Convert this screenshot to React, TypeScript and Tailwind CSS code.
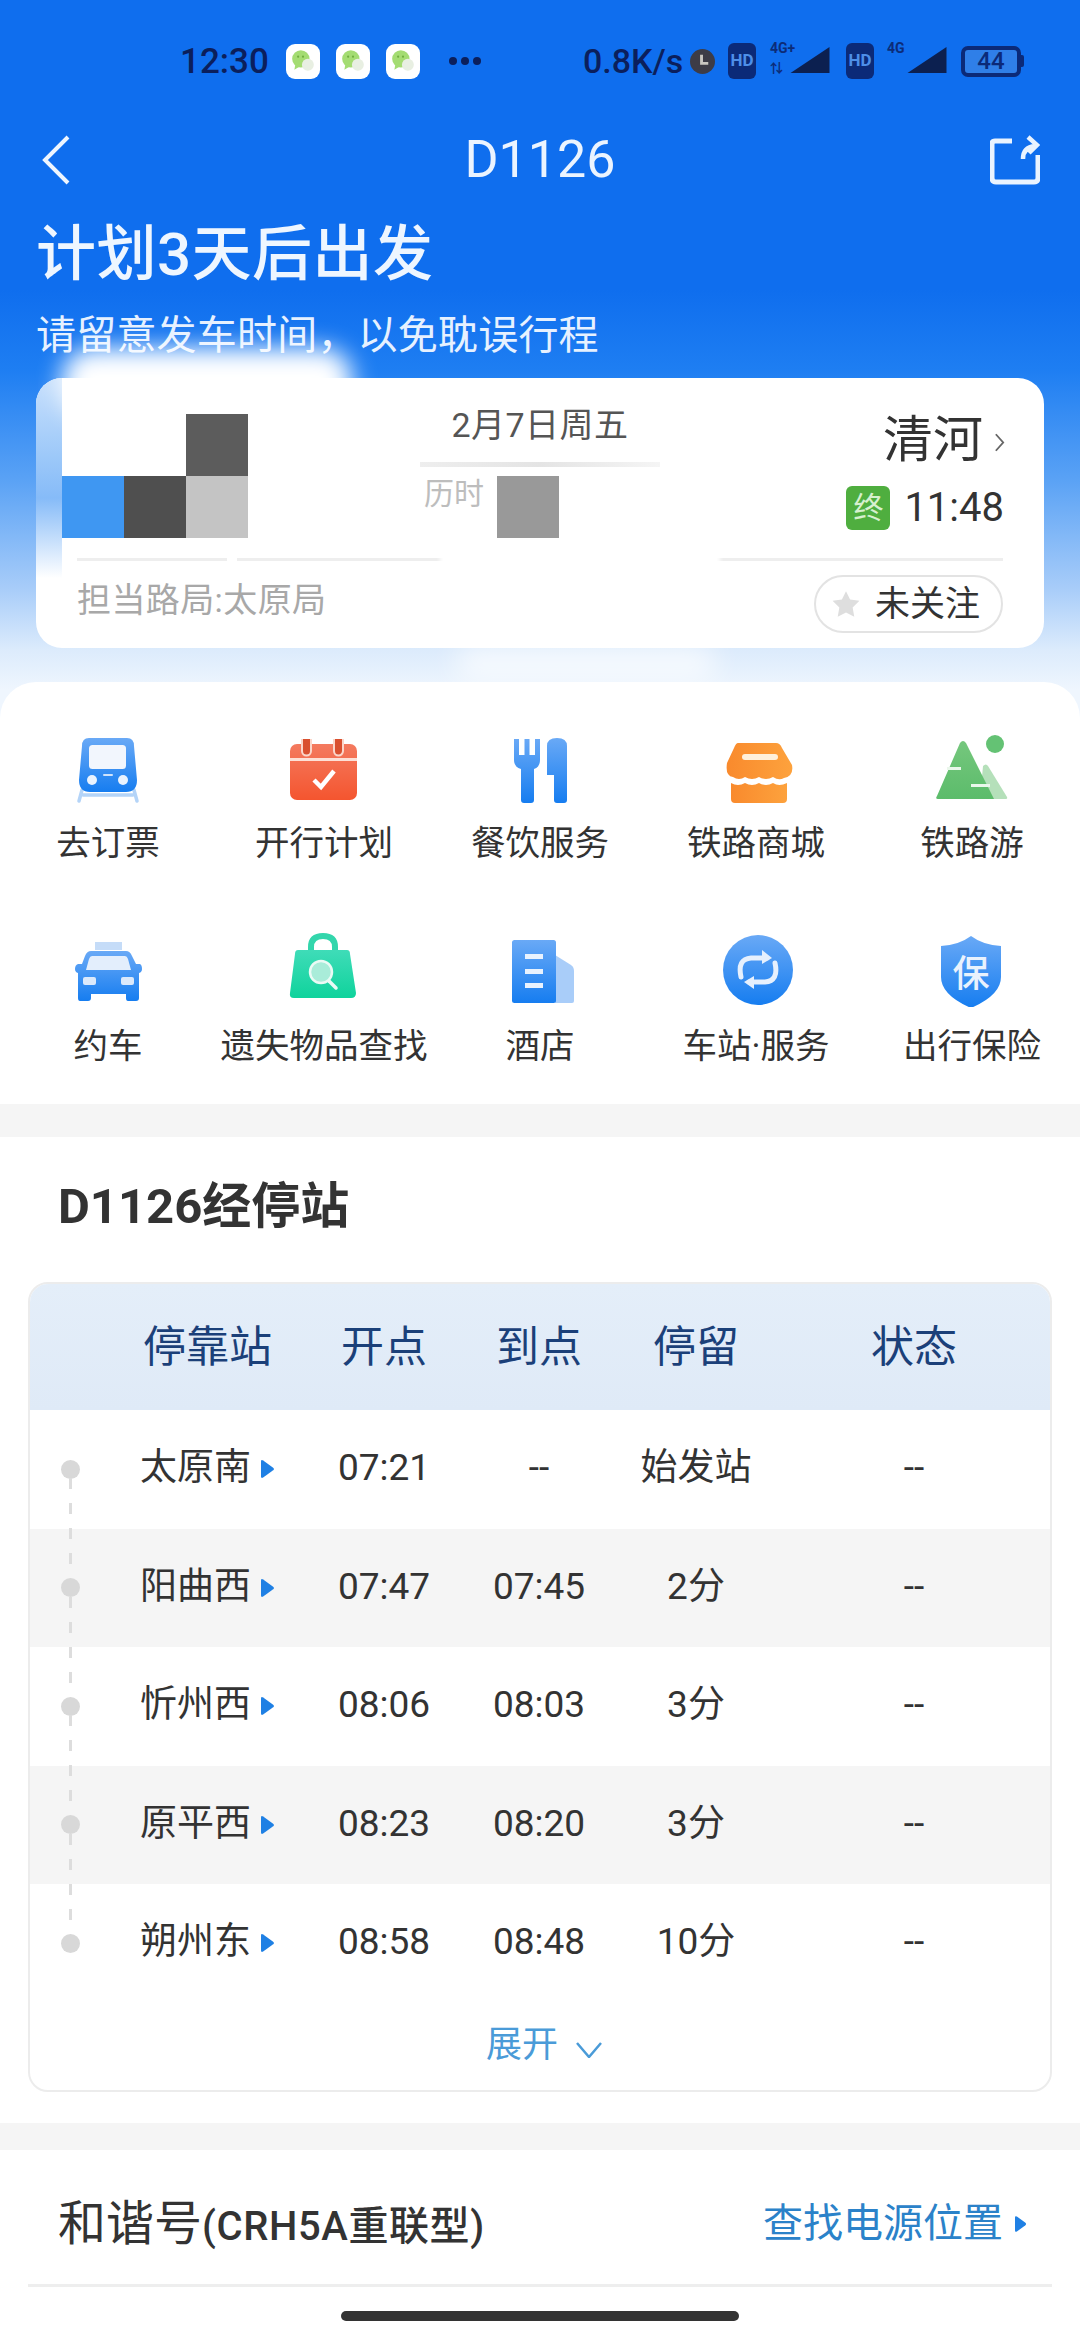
import React from "react";

const FONT = "font-['Roboto','Noto_Sans_CJK_SC',sans-serif]";

function Grad({ id, from = "#69a9f6", to = "#167df0", x2 = "0", y2 = "1" }: { id: string; from?: string; to?: string; x2?: string; y2?: string }) {
  return (
    <defs>
      <linearGradient id={id} x1="0" y1="0" x2={x2} y2={y2}>
        <stop offset="0" stopColor={from} />
        <stop offset="1" stopColor={to} />
      </linearGradient>
    </defs>
  );
}

const Box = ({ children }: { children: React.ReactNode }) => (
  <svg viewBox="0 0 80 80" className="w-[80px] h-[80px] block">{children}</svg>
);

function TrainIcon() {
  return (
    <Box>
      <Grad id="g1" />
      <path d="M14 60 L11 71 M66 60 L69 71 M15 65 H65" stroke="#b4d4f8" strokeWidth="3.5" fill="none" strokeLinecap="round" />
      <path d="M21 8 H59 Q66 8 66 16 L69 50 Q69 62 58 62 H22 Q11 62 11 50 L14 16 Q14 8 21 8 Z" fill="url(#g1)" />
      <rect x="21" y="15" width="37" height="24" rx="3.5" fill="#f2f6fd" />
      <circle cx="24" cy="50" r="5" fill="#eaf3fe" />
      <circle cx="55" cy="50" r="5" fill="#eaf3fe" />
      <rect x="35" y="44" width="10" height="2" rx="1" fill="#cfe3fb" />
    </Box>
  );
}
function CalendarIcon() {
  return (
    <Box>
      <Grad id="g2" from="#f47a5f" to="#f4552f" />
      <rect x="6" y="14" width="67" height="56" rx="7" fill="url(#g2)" />
      <rect x="6" y="28" width="67" height="3" fill="#fde0d6" />
      <path d="M18 9 V21 a4.5 4.5 0 0 0 9 0 V9" fill="#d9502f" stroke="#fbd6ca" strokeWidth="2" />
      <path d="M50 9 V21 a4.5 4.5 0 0 0 9 0 V9" fill="#d9502f" stroke="#fbd6ca" strokeWidth="2" />
      <path d="M30 50 L37 57 L50 41" fill="none" stroke="#fff" strokeWidth="4.5" />
    </Box>
  );
}
function FoodIcon() {
  return (
    <Box>
      <Grad id="g3" />
      <path d="M14 9 H19 V25 H24.5 V9 H29.5 V25 H35 V9 H40 V30 Q40 37 34 39 V70 Q34 73 31 73 H24 Q21 73 21 70 V39 Q14 37 14 30 Z" fill="url(#g3)" />
      <path d="M47 16 Q47 8 57 8 Q67 8 67 16 V70 Q67 73 64 73 H57 Q54 73 54 70 V45 H47 Z" fill="url(#g3)" />
    </Box>
  );
}
function ShopIcon() {
  return (
    <Box>
      <Grad id="g4" from="#f98a2d" to="#fda23d" x2="1" y2="0" />
      <path d="M22 13 H60 Q64 13 66 18 L76 35 Q78 46 68 48 Q63 51 57 47 Q50 51 43 47 Q36 51 29 47 Q23 51 17 47 Q9 46 11 33 L18 18 Q20 13 22 13 Z" fill="url(#g4)" />
      <rect x="26" y="24" width="36" height="6" rx="3" fill="#fff0da" />
      <path d="M15 53 Q22 57 29 53 Q36 57 43 53 Q50 57 57 53 Q63 57 71 53 V69 Q71 73 67 73 H19 Q15 73 15 69 Z" fill="url(#g4)" />
    </Box>
  );
}
function MountainIcon() {
  return (
    <Box>
      <Grad id="g5" from="#75c77d" to="#5cbc6b" />
      <path d="M51 36 Q54 33 56 36 L75 67 Q76 69 73 69 H48 Z" fill="#b5e0ba" />
      <path d="M28 13 Q31 9 34 13 L62 69 H6 Q3 69 5 66 Z" fill="url(#g5)" />
      <rect x="15" y="37" width="14" height="3" fill="#eaf7eb" />
      <rect x="39" y="54" width="19" height="3" fill="#eaf7eb" />
      <circle cx="63" cy="14" r="9" fill="#64c274" />
    </Box>
  );
}
function TaxiIcon() {
  return (
    <Box>
      <Grad id="g6" />
      <rect x="27" y="15" width="27" height="8" fill="#c5dcf8" />
      <path d="M23 24 H58 Q62 24 64 29 L68 37 H72 Q74 38 74 42 Q74 45 71 46 V71 Q71 74 68 74 H60 Q58 74 58 71 V67 H23 V71 Q23 74 20 74 H12 Q10 74 10 71 V46 Q7 45 7 42 Q7 38 10 37 H14 L17 29 Q19 24 23 24 Z" fill="url(#g6)" />
      <path d="M24 29 H57 Q59 29 60 32 L63 43 H18 L21 32 Q22 29 24 29 Z" fill="#e3eefc" />
      <rect x="15" y="50" width="13" height="8" rx="2" fill="#dbe9fb" />
      <rect x="53" y="50" width="13" height="8" rx="2" fill="#dbe9fb" />
    </Box>
  );
}
function BagIcon() {
  return (
    <Box>
      <Grad id="g7" from="#3fdcb8" to="#0fd39c" />
      <path d="M27 23 V20 Q27 9 39 9 Q51 9 51 20 V23" fill="none" stroke="#33d6ac" strokeWidth="6" />
      <path d="M14 23 H63 Q66 23 66 27 L72 66 Q72 71 67 71 H10 Q5 71 6 66 L11 27 Q11 23 14 23 Z" fill="url(#g7)" />
      <circle cx="37" cy="45" r="11" fill="#a9ecd9" stroke="#eafaf5" strokeWidth="2.5" />
      <path d="M45 54 L52 61" stroke="#eafaf5" strokeWidth="3.5" strokeLinecap="round" />
    </Box>
  );
}
function HotelIcon() {
  return (
    <Box>
      <Grad id="g8" />
      <path d="M55 28 L71 38 Q74 40 74 44 V74 Q74 76 72 76 H55 Z" fill="#a9cdf9" />
      <rect x="12" y="13" width="44" height="63" rx="2.5" fill="url(#g8)" />
      <rect x="25" y="27" width="18" height="5" fill="#e8f2fe" />
      <rect x="25" y="42" width="18" height="5" fill="#e8f2fe" />
      <rect x="25" y="56" width="18" height="5" fill="#e8f2fe" />
    </Box>
  );
}
function SwapIcon() {
  return (
    <Box>
      <Grad id="g9" />
      <circle cx="42" cy="43" r="35" fill="url(#g9)" />
      <path d="M25 50 Q21 32 35 31 H51" fill="none" stroke="#e6f0fd" strokeWidth="5" strokeLinecap="round" />
      <path d="M46 23 L56 31 L46 37 Z" fill="#e6f0fd" />
      <path d="M59 36 Q63 54 49 55 H33" fill="none" stroke="#e6f0fd" strokeWidth="5" strokeLinecap="round" />
      <path d="M38 49 L28 55 L38 62 Z" fill="#e6f0fd" />
    </Box>
  );
}
function ShieldIcon() {
  return (
    <Box>
      <Grad id="g10" />
      <path d="M39 9 Q51 18 69 19 V50 Q69 68 39 81 Q9 68 9 50 V19 Q27 18 39 9 Z" fill="url(#g10)" />
      <text x="39" y="60" textAnchor="middle" fontSize="37" fontFamily="'Noto Sans CJK SC',sans-serif" fontWeight="500" fill="#e9f2fd">保</text>
    </Box>
  );
}

const row1 = [
  { t: "去订票", I: TrainIcon },
  { t: "开行计划", I: CalendarIcon },
  { t: "餐饮服务", I: FoodIcon },
  { t: "铁路商城", I: ShopIcon },
  { t: "铁路游", I: MountainIcon },
];
const row2 = [
  { t: "约车", I: TaxiIcon },
  { t: "遗失物品查找", I: BagIcon },
  { t: "酒店", I: HotelIcon },
  { t: "车站·服务", I: SwapIcon },
  { t: "出行保险", I: ShieldIcon },
];

const stops = [
  ["太原南", "07:21", "--", "始发站"],
  ["阳曲西", "07:47", "07:45", "2分"],
  ["忻州西", "08:06", "08:03", "3分"],
  ["原平西", "08:23", "08:20", "3分"],
  ["朔州东", "08:58", "08:48", "10分"],
];

const COLS = "grid grid-cols-[110px_170px_148px_162px_152px_1fr] items-center";

function Tri({ className }: { className: string }) {
  return (
    <svg viewBox="0 0 13 20" className={className}>
      <path d="M2 2 L11 8.5 Q13 10 11 11.5 L2 18 Q0 19 0 17 V3 Q0 1 2 2 Z" fill="#1f80e4" />
    </svg>
  );
}

function WeChat() {
  return (
    <span className="w-[34px] h-[35px] rounded-[9px] bg-white flex items-center justify-center">
      <svg viewBox="0 0 24 24" className="w-[26px] h-[26px]">
        <ellipse cx="10" cy="10" rx="8" ry="8" fill="#a4dc72" />
        <path d="M5 15 L4 20 L9 17 Z" fill="#a4dc72" />
        <ellipse cx="16.5" cy="15.5" rx="5.5" ry="5.5" fill="#e8efe2" />
        <circle cx="7.5" cy="8" r="1" fill="#6fae3f" />
        <circle cx="12" cy="8" r="1" fill="#6fae3f" />
      </svg>
    </span>
  );
}

function Signal({ label, small }: { label: string; small?: boolean }) {
  return (
    <span className="relative w-[64px] h-[32px] block">
      <span className="absolute left-0 top-[-4px] text-[14px] leading-[14px] font-bold text-[#0c2c78]">{label}</span>
      {small && <span className="absolute left-0 top-[17px] text-[13px] leading-[14px] font-bold text-[#0c2c78]">⇅</span>}
      <svg viewBox="0 0 48 32" className="absolute right-0 top-[2px] w-[48px] h-[26px]">
        <path d="M0 32 L48 0 V32 Z" fill="#0c2050" />
      </svg>
    </span>
  );
}

const HD = () => (
  <span className="w-[28px] h-[36px] rounded-[6px] bg-[#0b2a78] text-[#4d8fe8] text-[17px] font-bold flex items-center justify-center">HD</span>
);

export default function App() {
  return (
    <div className={`${FONT} relative w-[1080px] h-[2340px] overflow-hidden bg-white`}>
      {/* Hero */}
      <div className="relative h-[720px] bg-[linear-gradient(to_bottom,#0f6eee_0px,#0f6eee_290px,#1e7ef2_370px,#5aa2f5_480px,#a9cdf9_590px,#dcebfc_650px,#eff6fe_690px)]">
        {/* Status bar */}
        <div className="flex items-center h-[122px] pl-[180px] text-[#0b1f5c]">
          <span className="text-[35px] font-medium w-[92px] leading-none">12:30</span>
          <span className="flex gap-[16px] ml-[14px]">
            <WeChat />
            <WeChat />
            <WeChat />
          </span>
          <span className="flex gap-[4px] ml-[29px]">
            <span className="w-[8px] h-[8px] rounded-full bg-[#0b1f5c]" />
            <span className="w-[8px] h-[8px] rounded-full bg-[#0b1f5c]" />
            <span className="w-[8px] h-[8px] rounded-full bg-[#0b1f5c]" />
          </span>
          <span className="ml-[102px] text-[34px] font-medium leading-none w-[107px]">0.8K/s</span>
          <svg viewBox="0 0 26 26" className="w-[25px] h-[25px]">
            <circle cx="13" cy="13" r="13" fill="#3d3c46" />
            <path d="M12 6 V15 H19" stroke="#c9c6c0" strokeWidth="3" fill="none" />
          </svg>
          <span className="ml-[13px]"><HD /></span>
          <span className="ml-[14px]"><Signal label="4G+" small /></span>
          <span className="ml-[12px]"><HD /></span>
          <span className="ml-[13px]"><Signal label="4G" /></span>
          <span className="ml-[10px] flex items-center">
            <span className="w-[60px] h-[31px] rounded-[7px] border-[4px] border-[#0b2a78] text-[24px] font-medium leading-none flex items-center justify-center text-[#0b2a78] bg-[#2f7fe8]">44</span>
            <span className="w-[3px] h-[12px] bg-[#0b2a78] rounded-r-[2px]" />
          </span>
        </div>

        {/* Nav */}
        <div className="flex items-center justify-between h-[76px] pl-[42px] pr-[40px]">
          <svg viewBox="0 0 28 50" className="w-[28px] h-[50px]">
            <path d="M26 2 L3 25 L26 48" fill="none" stroke="#eef6ff" strokeWidth="4" />
          </svg>
          <span className="text-[52px] text-[#ebf4ff] leading-none ml-[20px]">D1126</span>
          <svg viewBox="0 0 50 50" className="w-[50px] h-[50px]">
            <path d="M22 6 H5 Q2 6 2 9 V43 Q2 47 6 47 H44 Q48 47 48 43 V20" fill="none" stroke="#e9f3ff" strokeWidth="5" />
            <path d="M33 24 Q33 12 45 11 M38 2 L47 10 L39 18" fill="none" stroke="#e9f3ff" strokeWidth="4.5" />
          </svg>
        </div>

        {/* Headline */}
        <div className="pl-[36px] mt-[22px] text-[60px] leading-[70px] tracking-[0.5px] text-[#eef6ff] font-medium">计划3天后出发</div>
        <div className="pl-[36px] mt-[22px] text-[40px] leading-[48px] tracking-[0.2px] text-[#e6f1ff]">请留意发车时间，以免耽误行程</div>

        {/* Train card */}
        <div className="relative mx-[36px] mt-[18px] h-[270px] rounded-[26px] bg-white">
          <div className="flex h-[180px]">
            <div className="w-[384px]" />
            <div className="w-[240px] flex flex-col pt-[27px] items-center">
              <span className="text-[34px] tracking-[0.5px] leading-[40px] text-[#555]">2月7日周五</span>
              <span className="w-[240px] h-[5px] mt-[17px] bg-[linear-gradient(to_right,#eeeeee,#e4e4e4,#f5f5f5)]" />
              <span className="self-start text-[30px] leading-[36px] mt-[9px] ml-[4px] text-[#bdbdbd]">历时</span>
            </div>
            <div className="flex-1 flex flex-col items-end pr-[40px] pt-[34px]">
              <span className="flex items-center">
                <span className="text-[50px] leading-[56px] text-[#333]">清河</span>
                <svg viewBox="0 0 12 22" className="w-[11px] h-[21px] ml-[11px] mr-[-1px] mt-[4px]">
                  <path d="M2 2 L10 11 L2 20" fill="none" stroke="#666" strokeWidth="2" />
                </svg>
              </span>
              <span className="flex items-center mt-[18px] mr-[0px]">
                <span className="w-[44px] h-[44px] rounded-[6px] bg-[#4fae3f] text-[#d7f0cf] text-[30px] leading-none flex items-center justify-center">终</span>
                <span className="text-[40px] leading-[44px] text-[#333] ml-[14px]">11:48</span>
              </span>
            </div>
          </div>
          <div className="mx-[41px] h-[3px] bg-[#eeeeee]" />
          <div className="flex items-center justify-between pl-[41px] pr-[41px] pt-[14px]">
            <span className="text-[34px] tracking-[0.4px] leading-[40px] mb-[8px] text-[#a8a8a8]">担当路局:太原局</span>
            <span className="flex items-center h-[58px] w-[189px] rounded-full border-2 border-[#e3e3e3] pl-[19px]">
              <svg viewBox="0 0 24 24" className="w-[28px] h-[28px] ml-[-3px]">
                <path d="M12 1 L15.5 8.2 L23.5 9.3 L17.7 15 L19.1 23 L12 19.2 L4.9 23 L6.3 15 L.5 9.3 L8.5 8.2 Z" fill="#dedede" />
              </svg>
              <span className="text-[35px] leading-none text-[#333] ml-[15px] whitespace-nowrap">未关注</span>
            </span>
          </div>

          {/* Mosaic over the privacy-blurred part of the card */}
          <div className="absolute left-0 top-0 w-[26px] h-[200px] rounded-tl-[26px] bg-[linear-gradient(to_bottom,#c8e0fc,#9cc8f9_40%,#86bbf8_60%,#ffffff)]" />
          <div className="absolute left-[26px] top-[-30px] w-[290px] h-[70px] rounded-[30px] bg-white blur-[12px]" />
          <div className="absolute left-[26px] top-[36px] w-[124px] h-[62px] bg-white" />
          <div className="absolute left-[150px] top-[36px] w-[62px] h-[62px] bg-[#5c5c5c]" />
          <div className="absolute left-[26px] top-[98px] w-[62px] h-[62px] bg-[#3f97f2]" />
          <div className="absolute left-[88px] top-[98px] w-[62px] h-[62px] bg-[#4f4f4f]" />
          <div className="absolute left-[150px] top-[98px] w-[62px] h-[62px] bg-[#c4c4c4]" />
          <div className="absolute left-[461px] top-[98px] w-[62px] h-[62px] bg-[#999999]" />
          <div className="absolute left-[191px] top-[172px] w-[10px] h-[18px] bg-white" />
          <div className="absolute left-[404px] top-[172px] w-[280px] h-[18px] bg-white blur-[2px]" />
          <div className="absolute left-[420px] top-[268px] w-[260px] h-[34px] rounded-full bg-white/70 blur-[14px]" />
        </div>
      </div>

      {/* Service grid */}
      <div className="relative mt-[-38px] h-[422px] rounded-t-[36px] bg-white pt-[48px]">
        <div className="grid grid-cols-5">
          {row1.map(({ t, I }) => (
            <div key={t} className="flex flex-col items-center">
              <I />
              <span className="mt-[16px] text-[34.5px] leading-[34px] text-[#333] whitespace-nowrap">{t}</span>
            </div>
          ))}
        </div>
        <div className="grid grid-cols-5 mt-[67px]">
          {row2.map(({ t, I }) => (
            <div key={t} className="flex flex-col items-center">
              <I />
              <span className="mt-[22px] text-[34.5px] leading-[34px] text-[#333] whitespace-nowrap">{t}</span>
            </div>
          ))}
        </div>
      </div>

      <div className="h-[33px] bg-[#f5f5f5]" />

      {/* Stops */}
      <div className="bg-white">
        <div className="h-[145px] pl-[58px] pt-[43px] text-[49px] leading-[54px] font-bold text-[#333]">D1126经停站</div>
        <div className="relative mx-[28px] h-[810px] rounded-[20px] border-2 border-[#ececec] overflow-hidden">
          <div className={`${COLS} h-[126px] bg-[linear-gradient(to_bottom,#e4eef9,#dfeaf7)] text-[43px] leading-none text-[#1b4079]`}>
            <span />
            <span className="pl-[3px] whitespace-nowrap">停靠站</span>
            <span className="text-center">开点</span>
            <span className="text-center">到点</span>
            <span className="text-center">停留</span>
            <span className="text-center pl-[6px]">状态</span>
          </div>
          {stops.map(([name, dep, arr, stay], i) => (
            <div key={name} className={`${COLS} relative h-[118.5px] text-[#333] text-[37px] leading-none ${i % 2 === 1 ? "bg-[#f5f5f5]" : "bg-white"}`}>
              <span className="flex justify-center pr-[30px]">
                <span className="relative z-10 w-[19px] h-[19px] rounded-full bg-[#d8d8d8]" />
              </span>
              {i < 4 && (
                <span className="absolute left-[39px] top-[68px] w-[3px] h-[100px] z-10 bg-[repeating-linear-gradient(to_bottom,#dddddd_0px,#dddddd_11px,transparent_11px,transparent_25px)]" />
              )}
              <span className="flex items-center whitespace-nowrap mb-[3px]">
                {name}
                <Tri className="w-[14px] h-[22px] ml-[10px] mt-[3px]" />
              </span>
              <span className="text-center mb-[3px]">{dep}</span>
              <span className="text-center mb-[3px]">{arr}</span>
              <span className="text-center mb-[3px]">{stay}</span>
              <span className="text-center pl-[6px] mb-[3px]">--</span>
            </div>
          ))}
          <div className="flex items-center justify-center h-[84px] pl-[8px] text-[36px] text-[#4a9bd8]">
            <span>展开</span>
            <svg viewBox="0 0 26 16" className="w-[26px] h-[16px] ml-[18px] mt-[10px]">
              <path d="M1 1 L13 15 L25 1" fill="none" stroke="#4a9bd8" strokeWidth="2.5" />
            </svg>
          </div>
          <div className="absolute left-[-2px] top-[708px] w-[3px] h-[12px] bg-white" />
          <div className="absolute right-[-2px] top-[708px] w-[3px] h-[12px] bg-white" />
        </div>
      </div>

      <div className="h-[27px] mt-[31px] bg-[#f5f5f5]" />

      {/* Train model */}
      <div className="mx-[28px] flex items-center justify-between h-[137px] pt-[14px] border-b-[3px] border-[#eeeeee] pl-[30px] pr-[25px] text-[#333]">
        <span className="flex items-center whitespace-nowrap">
          <span className="text-[48px] leading-none">和谐号</span>
          <span className="text-[40px] leading-none font-medium tracking-[0.6px] mt-[5px]">(CRH5A重联型)</span>
        </span>
        <span className="flex items-center text-[40px] leading-none text-[#2b82c9] whitespace-nowrap">
          查找电源位置
          <Tri className="w-[12px] h-[22px] ml-[12px]" />
        </span>
      </div>

      {/* Home indicator */}
      <div className="flex justify-center mt-[24px]">
        <span className="w-[398px] h-[10px] rounded-full bg-[#333]" />
      </div>
    </div>
  );
}
